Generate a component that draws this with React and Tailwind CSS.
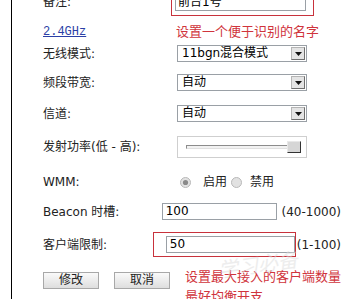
import React from 'react';

const cjk = { fontFamily: '"DejaVu Sans", "Noto Sans CJK SC", sans-serif' };

function Select({ value }) {
  return (
    <div className="flex h-[17px] w-[130px] items-center border border-[#9aa0a6] bg-white">
      <span className="flex-1 pl-[4px] text-[12px] leading-[15px] text-black">{value}</span>
      <span className="mr-[1px] flex h-[13px] w-[14px] items-center justify-center border border-[#b4b4b4] border-r-[#6e6e6e] border-b-[#6e6e6e] bg-[#e4e4e4]">
        <svg width="7" height="4" viewBox="0 0 7 4">
          <path d="M0 0h7L3.5 4z" fill="#111" />
        </svg>
      </span>
    </div>
  );
}

function Field({ value, width = 'w-[130px]' }) {
  return (
    <div className={`flex h-[17px] ${width} items-center border border-[#9aa0a6] bg-white pl-[3px] text-[12px] leading-[15px] text-black`}>
      {value}
    </div>
  );
}

function Radio({ checked }) {
  return (
    <svg width="11" height="11" viewBox="0 0 11 11">
      <circle cx="5.5" cy="5.5" r="5" fill="#e2e2e2" stroke="#b8b8b8" />
      {checked && <circle cx="5.5" cy="5.5" r="2.6" fill="#8a8a8a" />}
    </svg>
  );
}

export default function App() {
  return (
    <div className="relative h-[299px] w-[341px] overflow-hidden bg-white text-[#222]" style={cjk}>
      <div className="ml-[11px] h-full border-l border-black pl-[31px]">
        <div className="flex flex-col">
          {/* 备注 */}
          <div className="mt-[-12px] flex h-[28px] items-center">
            <div className="w-[128px] text-[12px]">备注:</div>
            <div className="flex h-[28px] w-[143px] items-end border border-[#c8323c] pb-[4px] pl-[3px]">
              <div className="flex h-[17px] w-[131px] items-center border border-[#9aa0a6] pl-[2px] text-[12px] leading-[15px] text-black">
                前台1号
              </div>
            </div>
          </div>

          {/* 2.4GHz */}
          <div className="flex h-[26px] items-start">
            <div className="w-[133px] pt-[2px]">
              <span
                className="text-[12px] leading-[14px] text-[#2b3fa6] underline"
                style={{ fontFamily: '"Liberation Mono", monospace' }}
              >
                2.4GHz
              </span>
            </div>
            <div className="mt-[8px] text-[13px] leading-[16px] text-[#d0343c]">设置一个便于识别的名字</div>
          </div>

          <div className="mt-[3px] flex h-[17px] items-center">
            <div className="w-[134px] text-[12px]">无线模式:</div>
            <Select value="11bgn混合模式" />
          </div>

          <div className="mt-[12px] flex h-[17px] items-center">
            <div className="w-[134px] text-[12px]">频段带宽:</div>
            <Select value="自动" />
          </div>

          <div className="mt-[14px] flex h-[17px] items-center">
            <div className="w-[134px] text-[12px]">信道:</div>
            <Select value="自动" />
          </div>

          {/* 发射功率 */}
          <div className="mt-[14px] flex h-[22px] items-center">
            <div className="w-[134px] text-[12px]">发射功率(低 - 高):</div>
            <div className="flex h-[22px] w-[130px] items-center border border-[#cfcfcf] pl-[8px]">
              <div className="h-[4px] w-[103px] border border-[#8c8c8c] border-r-[#e0e0e0] border-b-[#e0e0e0] bg-[#f2f2f2]" />
              <div className="ml-[-2px] h-[12px] w-[14px] border border-[#e8e8e8] border-r-[#333] border-b-[#333] bg-[#d6d6d6]" />
            </div>
          </div>

          {/* WMM */}
          <div className="mt-[16px] flex h-[16px] items-center">
            <div className="w-[137px] text-[12px]">WMM:</div>
            <div className="flex items-center text-[12px]">
              <Radio checked />
              <span className="ml-[12px]">启用</span>
              <span className="ml-[4px] flex">
                <Radio />
              </span>
              <span className="ml-[8px]">禁用</span>
            </div>
          </div>

          {/* Beacon */}
          <div className="mt-[13px] flex h-[17px] items-center">
            <div className="w-[134px] text-[12px]">Beacon 时槽:</div>
            <Field value="100" />
            <span className="ml-[4px] whitespace-nowrap text-[12px]">(40-1000)</span>
          </div>

          {/* 客户端限制 */}
          <div className="mt-[12px] flex h-[25px] items-center">
            <div className="w-[121px] text-[12px]">客户端限制:</div>
            <div className="flex h-[25px] w-[147px] items-center border border-[#c8323c] pl-[12px]">
              <Field value="50" width="w-[129px]" />
            </div>
            <span className="ml-[1px] whitespace-nowrap text-[12px]">(1-100)</span>
          </div>

          {/* buttons */}
          <div className="mt-[15px] flex items-start">
            <button className="h-[17px] w-[56px] border border-[#a8a8a8] bg-gradient-to-b from-[#fafafa] to-[#dedede] text-[12px] leading-[15px] text-[#222]">
              修改
            </button>
            <button className="ml-[15px] h-[17px] w-[56px] border border-[#a8a8a8] bg-gradient-to-b from-[#fafafa] to-[#dedede] text-[12px] leading-[15px] text-[#222]">
              取消
            </button>
            <div className="ml-[15px] mt-[-5px] whitespace-nowrap text-[13px] leading-[20px] text-[#d0343c]">
              <div>设置最大接入的客户端数量</div>
              <div>最好均衡开支</div>
            </div>
          </div>
        </div>
      </div>

      {/* faint watermark */}
      <div className="pointer-events-none absolute left-[218px] top-[250px] rotate-[-8deg] text-[20px] italic text-[#dcdcdc] opacity-50">
        学习必备
      </div>
    </div>
  );
}
